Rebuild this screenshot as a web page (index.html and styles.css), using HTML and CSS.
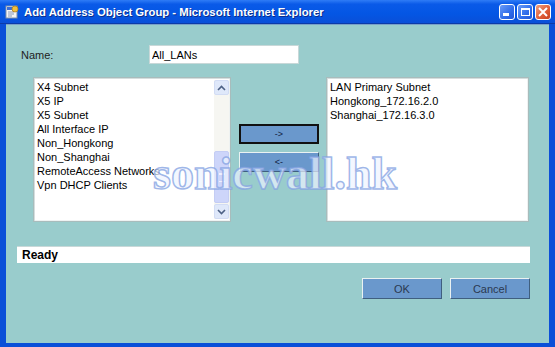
FILE: index.html
```html
<!DOCTYPE html>
<html lang="en">
<head>
    <meta charset="UTF-8">
    <title>Add Address Object Group - Microsoft Internet Explorer</title>
    <link rel="stylesheet" href="styles.css">
</head>
<body>
    <div class="window">
        <div class="titlebar">
            <svg class="app-icon" width="14" height="14" viewBox="0 0 14 14">
                <rect x="1" y="1" width="11" height="12" fill="#f4f4f4" stroke="#7f8fa8"/>
                <rect x="2" y="2" width="9" height="3" fill="#3c6fd8"/>
                <path d="M3 7h6M3 9h6M3 11h4" stroke="#8898b8"/>
                <circle cx="10" cy="4" r="3" fill="#f0c040" stroke="#b08020" stroke-width="0.8"/>
            </svg>
            <span class="title">Add Address Object Group - Microsoft Internet Explorer</span>
            <div class="ctrls">
                <span class="ctrl"><i class="min"></i></span>
                <span class="ctrl"><i class="max"></i></span>
                <span class="ctrl close">
                    <svg width="10" height="10" viewBox="0 0 10 10"><path d="M1 1L9 9M9 1L1 9" stroke="#fff" stroke-width="2"/></svg>
                </span>
            </div>
        </div>

        <div class="content">
            <div class="name-row">
                <label for="name">Name:</label>
                <input type="text" id="name" value="All_LANs">
            </div>

            <div class="lists">
                <div class="listbox left">
                    <div class="items">
                        <div>X4 Subnet</div>
                        <div>X5 IP</div>
                        <div>X5 Subnet</div>
                        <div>All Interface IP</div>
                        <div>Non_Hongkong</div>
                        <div>Non_Shanghai</div>
                        <div>RemoteAccess Networks</div>
                        <div>Vpn DHCP Clients</div>
                    </div>
                    <div class="scrollbar">
                        <span class="arrow"><svg width="9" height="6" viewBox="0 0 9 6"><path d="M1 5L4.5 1.5L8 5" fill="none" stroke="#4d6185" stroke-width="1.6"/></svg></span>
                        <span class="track"><span class="thumb"><i></i></span></span>
                        <span class="arrow"><svg width="9" height="6" viewBox="0 0 9 6"><path d="M1 1L4.5 4.5L8 1" fill="none" stroke="#4d6185" stroke-width="1.6"/></svg></span>
                    </div>
                </div>

                <div class="movers">
                    <button class="btn focused">-&gt;</button>
                    <button class="btn">&lt;-</button>
                </div>

                <div class="listbox right">
                    <div class="items">
                        <div>LAN Primary Subnet</div>
                        <div>Hongkong_172.16.2.0</div>
                        <div>Shanghai_172.16.3.0</div>
                    </div>
                </div>
            </div>

            <div class="status">Ready</div>

            <div class="actions">
                <button class="btn big">OK</button>
                <button class="btn big">Cancel</button>
            </div>

            <div class="watermark">sonicwall.hk</div>
        </div>
    </div>
</body>
</html>
```

FILE: styles.css
```css
body {
    margin: 0;
    font-family: "Liberation Sans", Arial, sans-serif;
    font-size: 11px;
    background: #99cccc;
}

.window {
    width: 555px;
    height: 347px;
    box-sizing: border-box;
    background: #0a4fd8;
    display: flex;
    flex-direction: column;
}

/* XP style title bar */
.titlebar {
    height: 23px;
    flex: none;
    display: flex;
    align-items: center;
    padding: 0 4px 0 5px;
    background: linear-gradient(180deg, #2f7cf6 0%, #0a5ae8 18%, #0456e4 60%, #0a4fd8 100%);
    border-bottom: 1px solid #0b3aa8;
}

.app-icon {
    flex: none;
    margin-right: 5px;
}

.title {
    color: #fff;
    font-weight: bold;
    font-size: 11.3px;
    text-shadow: 1px 1px 0 #0b2c8a;
    white-space: nowrap;
}

.ctrls {
    margin-left: auto;
    display: flex;
    gap: 2px;
}

.ctrl {
    width: 16px;
    height: 16px;
    box-sizing: border-box;
    border: 1px solid #fff;
    border-radius: 3px;
    background: linear-gradient(135deg, #6b9cf8 0%, #2f6cea 60%, #2257d8 100%);
    position: relative;
    display: flex;
    align-items: center;
    justify-content: center;
}

.ctrl .min {
    position: absolute;
    left: 3px;
    bottom: 3px;
    width: 6px;
    height: 3px;
    background: #fff;
}

.ctrl .max {
    width: 9px;
    height: 8px;
    box-sizing: border-box;
    border: 1px solid #fff;
    border-top-width: 2px;
}

.ctrl.close {
    background: linear-gradient(135deg, #f0a080 0%, #e0603a 55%, #c8401e 100%);
}

.content {
    flex: 1;
    margin: 0 6px 4px 6px;
    background: #99cccc;
    border-top: 1px solid #7aa0c8;
    position: relative;
}

.name-row {
    display: flex;
    align-items: center;
    margin-top: 20px;
    padding-left: 15px;
    height: 19px;
}

.name-row label {
    width: 128px;
    color: #222;
}

.name-row input {
    width: 150px;
    height: 19px;
    box-sizing: border-box;
    border: 1px solid #c8d8d8;
    background: #fff;
    padding: 0 2px;
    font-family: inherit;
    font-size: 11px;
    color: #000;
}

.lists {
    display: flex;
    margin-top: 13px;
    margin-left: 27px;
}

.listbox {
    height: 145px;
    box-sizing: border-box;
    background: #fff;
    border: 1px solid #a8bcbc;
    box-shadow: inset 1px 1px 0 #d4dede, inset -1px -1px 0 #eef2f2;
    display: flex;
}

.listbox.left {
    width: 198px;
}

.listbox.right {
    width: 203px;
    margin-left: 7px;
}

.items {
    flex: 1;
    padding: 2px 3px;
    line-height: 14px;
    color: #000;
    white-space: nowrap;
}

.scrollbar {
    width: 15px;
    margin: 2px 1px 2px 0;
    display: flex;
    flex-direction: column;
    background: #f6f6f2;
}

.scrollbar .arrow {
    height: 15px;
    box-sizing: border-box;
    border: 1px solid #d2dcf4;
    border-radius: 2px;
    background: #dfe8fa;
    display: flex;
    align-items: center;
    justify-content: center;
}

.scrollbar .track {
    flex: 1;
    display: flex;
    flex-direction: column;
    justify-content: flex-end;
    padding-bottom: 1px;
}

.scrollbar .thumb {
    height: 52px;
    box-sizing: border-box;
    border: 1px solid #c4cdf4;
    border-radius: 2px;
    background: #cdd5fa;
    display: flex;
    align-items: center;
    justify-content: center;
}

.scrollbar .thumb i {
    width: 6px;
    height: 7px;
    border-top: 1px solid #eef0ff;
    border-bottom: 1px solid #eef0ff;
    box-shadow: inset 0 3px 0 -2px #eef0ff;
}

.movers {
    width: 80px;
    margin-left: 8px;
    display: flex;
    flex-direction: column;
    gap: 8px;
    padding-top: 47px;
}

.btn {
    height: 20px;
    box-sizing: border-box;
    background: #6a98cc;
    border: 1px solid;
    border-color: #eaf2f2 #3f5f7f #3f5f7f #eaf2f2;
    color: #112244;
    font-family: inherit;
    font-size: 9px;
    padding: 0;
}

.btn.focused {
    border: 2px solid #111;
}

.status {
    margin: 24px 0 0 11px;
    width: 513px;
    height: 17px;
    box-sizing: border-box;
    background: #fff;
    border-top: 1px solid #c8d8d8;
    padding-left: 5px;
    font-weight: bold;
    font-size: 12px;
    line-height: 16px;
    color: #000;
}

.actions {
    display: flex;
    justify-content: flex-end;
    gap: 8px;
    margin-top: 15px;
    width: 524px;
}

.btn.big {
    width: 80px;
    height: 21px;
    font-size: 11px;
    color: #2a3850;
}

/* watermark that sits over the dialog */
.watermark {
    position: absolute;
    left: 147px;
    top: 122px;
    font-family: "Liberation Serif", "Times New Roman", serif;
    font-weight: bold;
    font-size: 46px;
    color: rgba(238, 244, 255, 0.7);
    -webkit-text-stroke: 1.5px rgba(130, 160, 225, 0.75);
    pointer-events: none;
}
```
